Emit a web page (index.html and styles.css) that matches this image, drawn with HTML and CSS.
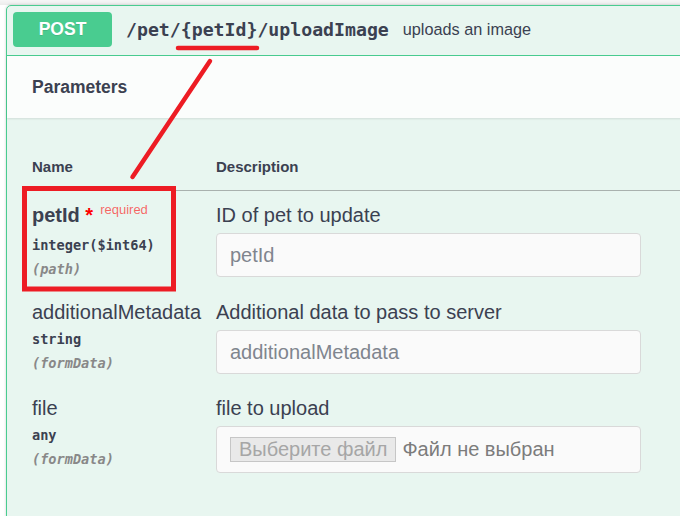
FILE: index.html
```html
<!DOCTYPE html>
<html lang="en">
<head>
<meta charset="utf-8">
<title>POST /pet/{petId}/uploadImage</title>
<link rel="stylesheet" href="styles.css">
</head>
<body>
<div class="page">
  <div class="top-shade"></div>
  <div class="opblock">
    <div class="summary">
      <span class="method">POST</span>
      <span class="path">/pet/{petId}/uploadImage</span>
      <span class="summary-desc">uploads an image</span>
    </div>
    <div class="section-header"><h4>Parameters</h4></div>
    <div class="table-container">
      <div class="params">
        <div class="th">Name</div>
        <div class="th">Description</div>

        <div class="td name-cell">
          <div class="pname required">petId&nbsp;<span class="star">*</span><span class="req">required</span></div>
          <div class="ptype">integer($int64)</div>
          <div class="pin">(path)</div>
        </div>
        <div class="td">
          <div class="pdesc">ID of pet to update</div>
          <input class="field" type="text" placeholder="petId">
        </div>

        <div class="td name-cell">
          <div class="pname">additionalMetadata</div>
          <div class="ptype">string</div>
          <div class="pin">(formData)</div>
        </div>
        <div class="td">
          <div class="pdesc">Additional data to pass to server</div>
          <input class="field" type="text" placeholder="additionalMetadata">
        </div>

        <div class="td name-cell">
          <div class="pname">file</div>
          <div class="ptype">any</div>
          <div class="pin">(formData)</div>
        </div>
        <div class="td">
          <div class="pdesc">file to upload</div>
          <div class="field file-field"><span class="file-btn">Выберите файл</span><span class="file-none">Файл не выбран</span></div>
        </div>
      </div>
    </div>
  </div>
  <svg class="annot" width="680" height="516" viewBox="0 0 680 516" aria-hidden="true">
    <line x1="178" y1="48" x2="257" y2="48" stroke="#ed1c24" stroke-width="4.5" stroke-linecap="round"/>
    <line x1="210" y1="61" x2="132.5" y2="177" stroke="#ed1c24" stroke-width="4.5" stroke-linecap="round"/>
    <rect x="24.5" y="188.5" width="149" height="100.5" fill="none" stroke="#ed1c24" stroke-width="5"/>
  </svg>
</div>
</body>
</html>
```
FILE: styles.css
```css
html, body {
  margin: 0;
  padding: 0;
  background: #fff;
  overflow: hidden;
}
body {
  font-family: "Liberation Sans", Arial, sans-serif;
  color: #3b4151;
}
.page {
  position: relative;
  width: 680px;
  height: 516px;
  padding: 5px 0 0 6px;
  box-sizing: border-box;
  overflow: hidden;
}
.top-shade {
  position: absolute;
  left: 0;
  top: 0;
  width: 100%;
  height: 5px;
  background: linear-gradient(#f6f6f6, #ececec);
}
.opblock {
  position: relative;
  width: 720px;
  min-height: 560px;
  border: 1px solid #49cc90;
  border-radius: 5px;
  background: #e8f6f0;
  box-shadow: 0 0 3px rgba(0, 0, 0, 0.19);
}
.summary {
  display: flex;
  align-items: center;
  padding: 6px 6px 8px 6px;
  border-bottom: 1px solid #49cc90;
}
.method {
  display: flex;
  align-items: center;
  justify-content: center;
  width: 99px;
  height: 35px;
  background: #49cc90;
  color: #fff;
  font-weight: 700;
  font-size: 17.5px;
  border-radius: 4px;
  text-shadow: 0 1px 0 rgba(0, 0, 0, 0.1);
}
.path {
  font-family: "DejaVu Sans Mono", monospace;
  font-weight: 700;
  font-size: 18.2px;
  margin: 0 14px;
  color: #3b4151;
}
.summary-desc {
  font-size: 16.25px;
  color: #3b4151;
}
.section-header {
  display: flex;
  align-items: center;
  min-height: 62px;
  padding: 0 25px;
  background: rgba(255, 255, 255, 0.8);
  box-shadow: 0 1px 2px rgba(0, 0, 0, 0.1);
}
.section-header h4 {
  margin: 0;
  font-size: 17.5px;
  font-weight: 700;
}
.table-container {
  padding: 25px;
}
.params {
  display: grid;
  grid-template-columns: 184px 1fr;
}
.th {
  font-size: 15px;
  font-weight: 700;
  line-height: 17px;
  padding: 15px 0;
  border-bottom: 1px solid #a9b1ae;
}
.td {
  padding: 12px 0 10px;
}
.pname {
  font-size: 20px;
  line-height: 24px;
  white-space: nowrap;
}
.pname.required {
  font-weight: 700;
}
.star {
  color: red;
}
.req {
  position: relative;
  top: -8px;
  padding-left: 7px;
  font-size: 13px;
  font-weight: 400;
  color: rgba(255, 0, 0, 0.6);
}
.ptype {
  font-family: "DejaVu Sans Mono", monospace;
  font-weight: 700;
  font-size: 13.6px;
  line-height: 18px;
  padding: 6px 0;
}
.pin {
  font-family: "DejaVu Sans Mono", monospace;
  font-weight: 700;
  font-style: italic;
  font-size: 13.6px;
  line-height: 18px;
  color: #888;
}
.pdesc {
  font-size: 20px;
  line-height: 24px;
}
.field {
  display: block;
  box-sizing: border-box;
  width: 425px;
  height: 44px;
  margin: 6px 0 0;
  padding: 0 13px;
  border: 1px solid #d9d9d9;
  border-radius: 4px;
  background: #fafafa;
  font-family: "Liberation Sans", Arial, sans-serif;
  font-size: 20px;
  color: #3b4151;
  outline: none;
}
.field::placeholder {
  color: #80858e;
}
.file-field {
  display: flex;
  align-items: center;
  height: 47px;
  padding: 0 13px;
}
.file-btn {
  box-sizing: border-box;
  height: 25px;
  line-height: 23px;
  padding: 0 8px;
  border: 1px solid #c6c6c6;
  background: #e9e9e9;
  color: #a6a6a6;
  white-space: nowrap;
}
.file-none {
  margin-left: 6px;
  color: #7c7c7c;
  white-space: nowrap;
}
.annot {
  position: absolute;
  left: 0;
  top: 0;
  pointer-events: none;
}
```
